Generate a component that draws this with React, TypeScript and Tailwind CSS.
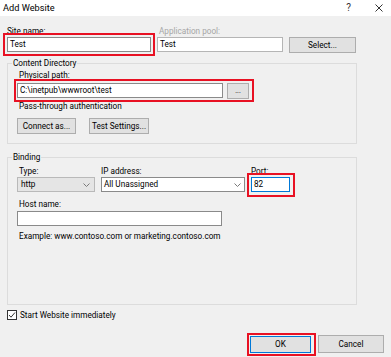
import React from 'react';

const font = "font-['Segoe_UI','Roboto','Liberation_Sans',sans-serif]";

const Chevron = ({ className = '' }: { className?: string }) => (
  <svg className={className} width="7" height="4" viewBox="0 0 7 4" fill="none">
    <path d="M0.5 0.5L3.5 3.5L6.5 0.5" stroke="#7a7a7a" strokeWidth="1" />
  </svg>
);

const Btn = ({ label, className = '' }: { label: string; className?: string }) => (
  <div className={`flex items-center justify-center whitespace-nowrap bg-[#e1e1e1] border border-[#adadad] text-black ${className}`}>
    {label}
  </div>
);

export default function App() {
  return (
    <div className={`w-[391px] h-[357px] bg-[#f0f0f0] overflow-hidden whitespace-nowrap text-[8.2px] text-black ${font}`}>
      {/* title bar */}
      <div className="h-[16px] bg-white flex items-center pl-[3px] text-[9.2px]">
        <span className="leading-none">Add Website</span>
        <span className="ml-auto text-[10px] text-[#333] leading-none">?</span>
        <svg className="ml-[24px] mr-[8px]" width="8" height="8" viewBox="0 0 8 8">
          <path d="M0.5 0.5L7.5 7.5M7.5 0.5L0.5 7.5" stroke="#333" strokeWidth="1" />
        </svg>
      </div>

      {/* site name / app pool */}
      <div className="flex items-start mt-[10px]">
        <div className="ml-[3px] w-[152px] flex flex-col">
          <div className="pl-[4px] h-[7px] leading-[10px]">Site name:</div>
          <div className="border-2 border-[#e81123] p-[2px]">
            <div className="h-[15px] bg-white border border-[#8a8a8a] flex items-center pl-[2px] leading-none">Test</div>
          </div>
        </div>
        <div className="ml-[2px] w-[126px] flex flex-col">
          <div className="pl-[2px] h-[7px] leading-[10px] text-[#a6a6a6]">Application pool:</div>
          <div className="mt-[4px] h-[15px] bg-white border border-[#b5b5b5] flex items-center pl-[2px] leading-none">Test</div>
        </div>
        <Btn label="Select..." className="ml-[6px] mt-[11px] w-[67px] h-[16px]" />
      </div>

      {/* content directory */}
      <fieldset className="ml-[7px] mt-[1px] w-[350px] border border-[#dcdcdc] pb-[9px]">
        <legend className="ml-[4px] px-[1px] leading-[12px]">Content Directory</legend>
        <div className="mt-[1px] pl-[11px] h-[9px] leading-[10px]">Physical path:</div>
        <div className="ml-[6px] w-[240px] border-2 border-[#e81123] pt-[2px] pb-[1px] pl-[1px] pr-[3px] flex items-start gap-[4px]">
          <div className="w-[206px] h-[15px] bg-white border border-[#8a8a8a] flex items-center pl-[2px] leading-none">C:\inetpub\wwwroot\test</div>
          <Btn label="..." className="w-[22px] h-[16px] text-[7px] leading-none" />
        </div>
        <div className="pl-[11px] h-[8px] leading-[8px]">Pass-through authentication</div>
        <div className="flex mt-[8px] ml-[9px] gap-[13px]">
          <Btn label="Connect as..." className="w-[59px] h-[16px]" />
          <Btn label="Test Settings..." className="w-[60px] h-[16px]" />
        </div>
      </fieldset>

      {/* binding */}
      <fieldset className="ml-[7px] mt-[7px] w-[350px] border border-[#dcdcdc] pb-[61px]">
        <legend className="ml-[4px] px-[1px] leading-[12px]">Binding</legend>
        <div className="flex items-start">
          <div className="ml-[9px] flex flex-col">
            <div className="pl-[2px] h-[14px] leading-[16px]">Type:</div>
            <div className="w-[78px] h-[15px] bg-[#e5e5e5] border border-[#b9b9b9] flex items-center pl-[3px] pr-[4px] leading-none">
              <span>http</span>
              <Chevron className="ml-auto" />
            </div>
          </div>
          <div className="ml-[6px] flex flex-col">
            <div className="h-[14px] leading-[16px]">IP address:</div>
            <div className="w-[144px] h-[15px] bg-white border border-[#8a8a8a] flex items-center pl-[2px] pr-[3px] leading-none">
              <span>All Unassigned</span>
              <Chevron className="ml-auto" />
            </div>
          </div>
          <div className="ml-[2px] flex flex-col">
            <div className="pl-[4px] h-[10px] leading-[16px]">Port:</div>
            <div className="w-[48px] border-2 border-[#e81123] pt-[2px] pb-[3px] pl-[2px] pr-[3px]">
              <div className="w-[39px] h-[15px] bg-white border border-[#0078d7] flex items-center pl-[2px] leading-none">82</div>
            </div>
          </div>
        </div>
        <div className="pl-[11px] h-[14px] leading-[14px]">Host name:</div>
        <div className="ml-[9px] w-[205px] h-[15px] bg-white border border-[#8a8a8a]" />
        <div className="mt-[3px] pl-[11px] h-[14px] leading-[14px]">Example: www.contoso.com or marketing.contoso.com</div>
      </fieldset>

      {/* start checkbox */}
      <div className="flex items-center mt-[5px] h-[10px]">
        <div className="ml-[7px] w-[10px] h-[10px] border border-[#333] bg-white flex items-center justify-center">
          <svg width="8" height="8" viewBox="0 0 8 8" fill="none">
            <path d="M1 4L3 6.2L7 1.5" stroke="#333" strokeWidth="1" />
          </svg>
        </div>
        <span className="ml-[3px] leading-none">Start Website immediately</span>
      </div>

      {/* footer buttons */}
      <div className="flex justify-end items-start mt-[13px] pr-[7px]">
        <div className="w-[69px] h-[23px] border-2 border-[#e81123] pl-[1px] pt-[1px]">
          <div className="w-[61px] h-[17px] flex items-center justify-center bg-[#e1e1e1] border border-[#0078d7]">OK</div>
        </div>
        <Btn label="Cancel" className="ml-[2px] mt-[2px] w-[66px] h-[18px]" />
      </div>
    </div>
  );
}
